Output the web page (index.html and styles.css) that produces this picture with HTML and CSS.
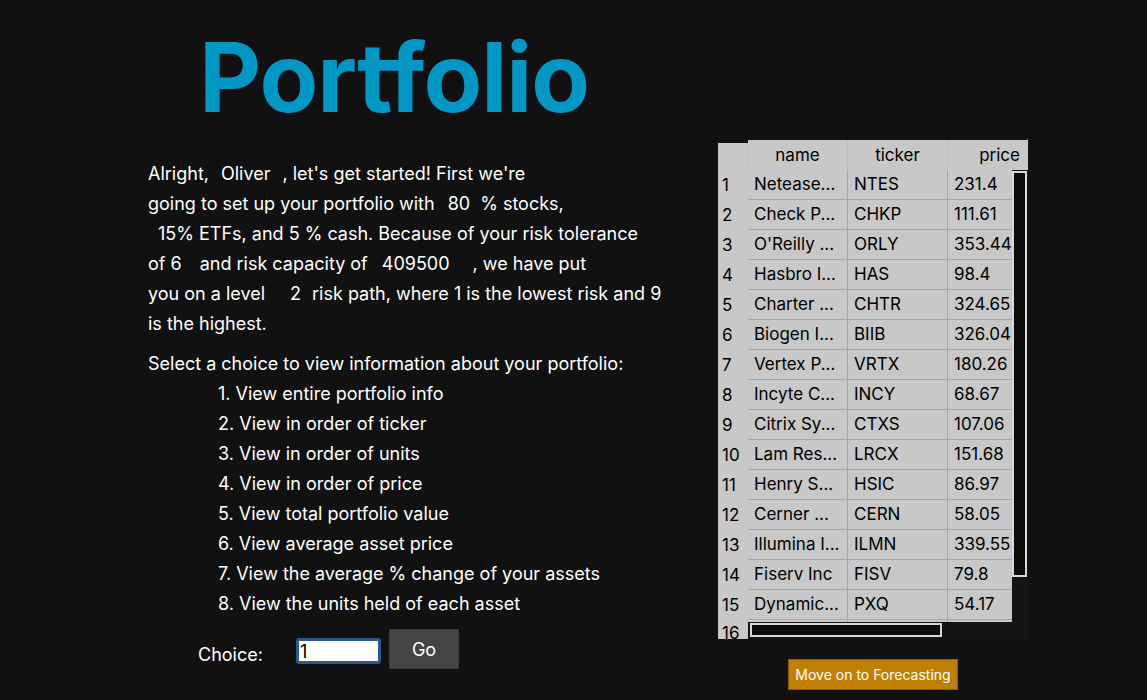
FILE: index.html
```html
<!DOCTYPE html>
<html>
<head>
<meta charset="utf-8">
<link rel="stylesheet" href="styles.css">
</head>
<body>
<div class="page">
  <div class="left">
    <h1 class="title">Portfolio</h1>
    <div class="intro">
      <div class="line">Alright,<span class="g13">Oliver</span><span class="g13">, let's get started! First we're</span></div>
      <div class="line">going to set up your portfolio with<span class="g14">80</span><span class="g11">% stocks,</span></div>
      <div class="line indent">15% ETFs, and 5 % cash. Because of your risk tolerance</div>
      <div class="line">of 6<span class="g19">and risk capacity of</span><span class="g15">409500</span><span class="g24">, we have put</span></div>
      <div class="line">you on a level<span class="g26">2</span><span class="g12">risk path, where 1 is the lowest risk and 9</span></div>
      <div class="line">is the highest.</div>
    </div>
    <div class="select">
      <div class="line">Select a choice to view information about your portfolio:</div>
      <ol class="choices">
        <li>1. View entire portfolio info</li>
        <li>2. View in order of ticker</li>
        <li>3. View in order of units</li>
        <li>4. View in order of price</li>
        <li>5. View total portfolio value</li>
        <li>6. View average asset price</li>
        <li>7. View the average % change of your assets</li>
        <li>8. View the units held of each asset</li>
      </ol>
    </div>
    <div class="choice-row">
      <span class="choice-label">Choice:</span>
      <input class="choice-input" type="text" value="1">
      <button class="go">Go</button>
    </div>
  </div>
  <div class="right">
    <div class="tbl">
      <div class="corner"></div>
      <div class="head">
        <div class="hc c-name">name</div>
        <div class="hc c-ticker">ticker</div>
        <div class="hc c-price">price</div>
      </div>
      <div class="idx">
        <div>1</div><div>2</div><div>3</div><div>4</div><div>5</div><div>6</div><div>7</div><div>8</div>
        <div>9</div><div>10</div><div>11</div><div>12</div><div>13</div><div>14</div><div>15</div><div class="partial">16</div>
      </div>
      <div class="body">
        <div class="row"><div class="c c-name">Netease...</div><div class="c c-ticker">NTES</div><div class="c c-price">231.4</div></div>
        <div class="row"><div class="c c-name">Check P...</div><div class="c c-ticker">CHKP</div><div class="c c-price">111.61</div></div>
        <div class="row"><div class="c c-name">O'Reilly ...</div><div class="c c-ticker">ORLY</div><div class="c c-price">353.44</div></div>
        <div class="row"><div class="c c-name">Hasbro I...</div><div class="c c-ticker">HAS</div><div class="c c-price">98.4</div></div>
        <div class="row"><div class="c c-name">Charter ...</div><div class="c c-ticker">CHTR</div><div class="c c-price">324.65</div></div>
        <div class="row"><div class="c c-name">Biogen I...</div><div class="c c-ticker">BIIB</div><div class="c c-price">326.04</div></div>
        <div class="row"><div class="c c-name">Vertex P...</div><div class="c c-ticker">VRTX</div><div class="c c-price">180.26</div></div>
        <div class="row"><div class="c c-name">Incyte C...</div><div class="c c-ticker">INCY</div><div class="c c-price">68.67</div></div>
        <div class="row"><div class="c c-name">Citrix Sy...</div><div class="c c-ticker">CTXS</div><div class="c c-price">107.06</div></div>
        <div class="row"><div class="c c-name">Lam Res...</div><div class="c c-ticker">LRCX</div><div class="c c-price">151.68</div></div>
        <div class="row"><div class="c c-name">Henry S...</div><div class="c c-ticker">HSIC</div><div class="c c-price">86.97</div></div>
        <div class="row"><div class="c c-name">Cerner ...</div><div class="c c-ticker">CERN</div><div class="c c-price">58.05</div></div>
        <div class="row"><div class="c c-name">Illumina I...</div><div class="c c-ticker">ILMN</div><div class="c c-price">339.55</div></div>
        <div class="row"><div class="c c-name">Fiserv Inc</div><div class="c c-ticker">FISV</div><div class="c c-price">79.8</div></div>
        <div class="row"><div class="c c-name">Dynamic...</div><div class="c c-ticker">PXQ</div><div class="c c-price">54.17</div></div>
        <div class="row"><div class="c c-name">&nbsp;</div><div class="c c-ticker">&nbsp;</div><div class="c c-price">&nbsp;</div></div>
      </div>
      <div class="vscroll"><div class="vthumb"></div></div>
      <div class="hscroll"><div class="hthumb"></div></div>
    </div>
    <button class="forecast">Move on to Forecasting</button>
  </div>
</div>
</body>
</html>
```

FILE: styles.css
```css
html, body {
  margin: 0;
  padding: 0;
  background: #111111;
}
body {
  font-family: Inter, "Noto Sans", "Liberation Sans", sans-serif;
  color: #ffffff;
  width: 1147px;
  height: 700px;
  overflow: hidden;
}
.page {
  display: flex;
  align-items: flex-start;
}
.left {
  width: 570px;
  padding-left: 148px;
}
.title {
  margin: 22px 0 0 51px;
  font-size: 96px;
  line-height: 110px;
  font-weight: 700;
  color: #0097c4;
  letter-spacing: -1px;
}
.intro {
  margin-top: 27px;
}
.line {
  height: 30px;
  line-height: 30px;
  font-size: 18px;
  white-space: nowrap;
}
.indent { padding-left: 10px; }
.g11 { margin-left: 10px; }
.g12 { margin-left: 11px; }
.g13 { margin-left: 12px; }
.g14 { margin-left: 13px; }
.g15 { margin-left: 14px; }
.g19 { margin-left: 18px; }
.g24 { margin-left: 23px; }
.g26 { margin-left: 25px; }
.select {
  margin-top: 10px;
}
.choices {
  list-style: none;
  margin: 0;
  padding: 0 0 0 70px;
}
.choices li {
  height: 30px;
  line-height: 30px;
  font-size: 18px;
  white-space: nowrap;
}
.choice-row {
  margin-top: 10px;
  display: flex;
  align-items: center;
  padding-left: 50px;
}
.choice-label {
  font-size: 18px;
  width: 98px;
  margin-top: 11px;
}
.choice-input {
  width: 78px;
  height: 20px;
  padding: 0 0 0 1px;
  border: 3px solid #2b5a8a;
  border-radius: 3px;
  background: #ffffff;
  color: #000000;
  font-family: inherit;
  font-size: 18px;
  margin: 4px 8px 0 0;
  outline: none;
}
.go {
  width: 70px;
  height: 40px;
  background: #444444;
  border: 1px solid #3a3a3a;
  color: #ffffff;
  font-family: inherit;
  font-size: 18px;
  padding: 0;
}
.right {
  width: 310px;
  padding-top: 139px;
  display: flex;
  flex-direction: column;
  align-items: center;
}
.tbl {
  width: 310px;
  height: 500px;
  display: grid;
  grid-template-columns: 30px 264px 16px;
  grid-template-rows: 31px 452px 17px;
  color: #000000;
  font-size: 17px;
  box-sizing: border-box;
  border-right: 1px solid #8a8a8a;
  border-bottom: 1px solid #8a8a8a;
}
.corner {
  grid-column: 1;
  grid-row: 1;
  background: #c8c8c8;
  margin-top: 4px;
  border-right: 1px solid #bdbdbd;
}
.head {
  grid-column: 2 / 4;
  grid-row: 1;
  background: #c8c8c8;
  display: flex;
  margin-top: 1px;
}
.hc {
  height: 30px;
  line-height: 30px;
  box-sizing: border-box;
  text-align: center;
}
.head .c-name { width: 100px; border-right: 1px solid #bdbdbd; }
.head .c-ticker { width: 100px; border-right: 1px solid #bdbdbd; }
.head .c-price { width: 79px; text-align: right; padding-right: 7px; }
.idx {
  grid-column: 1;
  grid-row: 2 / 4;
  background: #c8c8c8;
  overflow: hidden;
}
.idx div {
  height: 30px;
  line-height: 30px;
  padding-left: 4px;
}
.idx .partial {
  height: 18px;
  line-height: 26px;
  overflow: visible;
}
.body {
  grid-column: 2;
  grid-row: 2;
  background: #c8c8c8;
  overflow: hidden;
}
.row {
  display: flex;
  height: 30px;
  box-sizing: border-box;
  border-bottom: 1px solid #a6a6a6;
}
.c {
  line-height: 29px;
  box-sizing: border-box;
  padding-left: 6px;
  white-space: nowrap;
  overflow: hidden;
}
.row .c-name { width: 100px; flex: none; border-right: 1px solid #a6a6a6; }
.row .c-ticker { width: 100px; flex: none; border-right: 1px solid #a6a6a6; }
.row .c-price { width: 80px; flex: none; }
.vscroll {
  grid-column: 3;
  grid-row: 2 / 4;
  background: #141414;
  padding: 1px 0 0 0;
}
.vthumb {
  width: 15px;
  height: 406px;
  box-sizing: border-box;
  border: 2px solid #d8d8d8;
  background: #0c0c0c;
}
.hscroll {
  grid-column: 2;
  grid-row: 3;
  background: #141414;
  padding: 1px 0 0 2px;
}
.hthumb {
  width: 192px;
  height: 14px;
  box-sizing: border-box;
  border: 2px solid #d8d8d8;
  background: #0c0c0c;
}
.forecast {
  margin-top: 20px;
  width: 170px;
  height: 31px;
  background: #c07f00;
  border: 1px solid #8c5c00;
  color: #ffffff;
  font-family: inherit;
  font-size: 14px;
  padding: 0;
}
```
